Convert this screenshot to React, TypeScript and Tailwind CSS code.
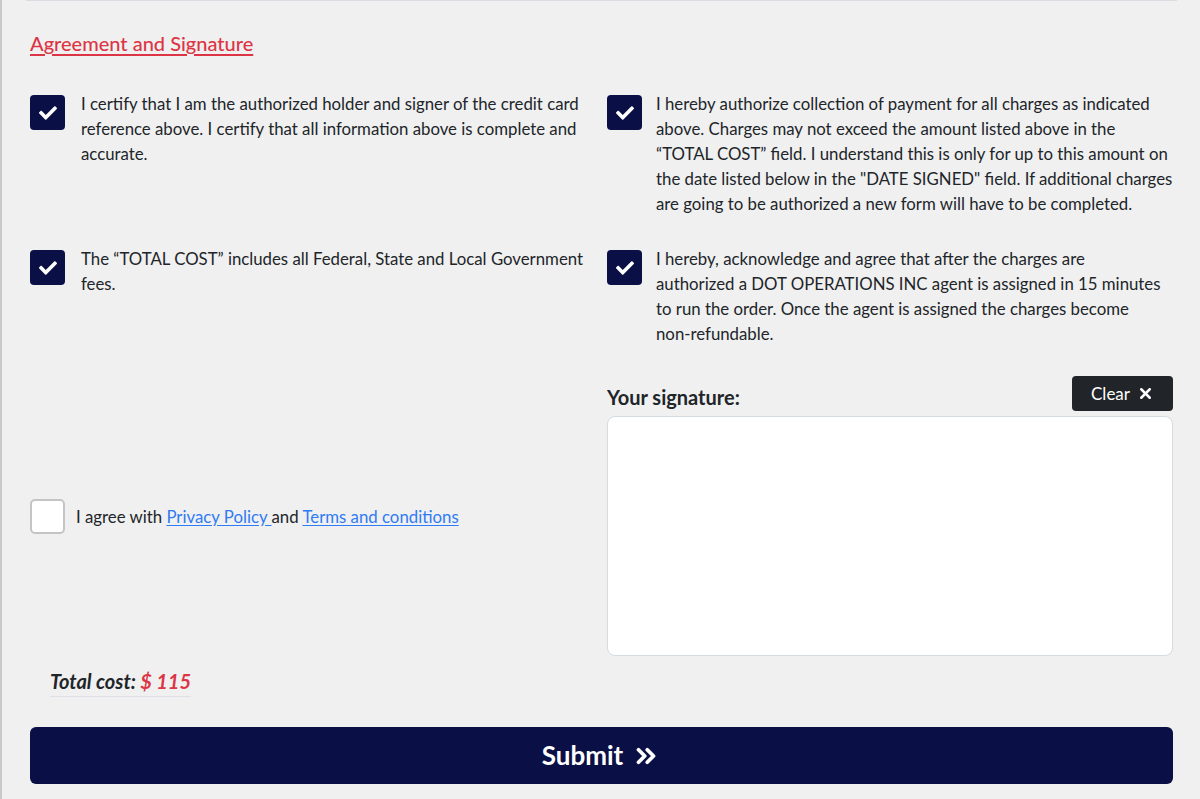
import { ChevronsRight, X } from "lucide-react";

const CheckBox = ({ checked }: { checked: boolean }) =>
    checked ? (
        <div className="w-[35px] h-[35px] shrink-0 rounded-[4px] bg-[#0a0f45] flex items-center justify-center mt-[4px]">
            <svg viewBox="0 0 512 512" className="w-[18px] h-[18px]" fill="#fff">
                <path d="M173.898 439.404l-166.4-166.4c-9.997-9.997-9.997-26.206 0-36.204l36.203-36.204c9.997-9.998 26.207-9.998 36.204 0L192 312.69 432.095 72.596c9.997-9.997 26.207-9.997 36.204 0l36.203 36.204c9.997 9.997 9.997 26.206 0 36.204l-294.4 294.401c-9.998 9.997-26.207 9.997-36.204-.001z" />
            </svg>
        </div>
    ) : (
        <div className="w-[35px] h-[35px] shrink-0 rounded-[5px] bg-white border-2 border-[#c4c4c4]" />
    );

const Agreement = ({ text, left, narrow }: { text: string; left?: boolean; narrow?: boolean }) => (
    <div className={`flex items-start ${left ? "gap-[16px]" : "gap-[14px]"}`}>
        <CheckBox checked />
        <p className={`text-[16.8px] leading-[25px] text-[#212529] ${narrow ? "pr-[10px]" : ""}`}>{text}</p>
    </div>
);

const App = () => {
    const items = [
        "I certify that I am the authorized holder and signer of the credit card reference above. I certify that all information above is complete and accurate.",
        "I hereby authorize collection of payment for all charges as indicated above. Charges may not exceed the amount listed above in the \u201CTOTAL COST\u201D field. I understand this is only for up to this amount on the date listed below in the \"DATE SIGNED\" field. If additional charges are going to be authorized a new form will have to be completed.",
        "The \u201CTOTAL COST\u201D includes all Federal, State and Local Government fees.",
        "I hereby, acknowledge and agree that after the charges are authorized a DOT OPERATIONS INC agent is assigned in 15 minutes to run the order. Once the agent is assigned the charges become non\u2011refundable.",
    ];

    return (
        <div className="min-h-screen w-full bg-[#f0f0f0] border-l-2 border-[#c9c9c9] font-['Lato',sans-serif] text-[#212529]">
            <div className="pl-[24px] pr-[23px] pb-[15px]">
                <div className="border-t border-[#d9dde2]" />
                <div className="px-[4px]">
                    {/* Heading */}
                    <h2 className="pt-[29px] text-[20px] leading-[26px] font-medium text-[#dc3545] underline underline-offset-[3px]">
                        Agreement and Signature
                    </h2>

                    {/* Agreements */}
                    <div className="grid grid-cols-2 gap-x-[11px] gap-y-[30px] mt-[35px]">
                        {items.map((t, i) => (
                            <Agreement key={i} text={t} left={i % 2 === 0} narrow={i === 3} />
                        ))}
                    </div>

                    {/* Policy + signature */}
                    <div className="grid grid-cols-2 gap-x-[11px] mt-[30px]">
                        <div className="flex items-center gap-[11px]">
                            <CheckBox checked={false} />
                            <span className="text-[16.8px] leading-[25px]">
                                I agree with{" "}
                                <a className="text-[#2f7bf5] underline underline-offset-2">Privacy Policy </a>and{" "}
                                <a className="text-[#2f7bf5] underline underline-offset-2">Terms and conditions</a>
                            </span>
                        </div>
                        <div className="flex flex-col">
                            <div className="flex items-end justify-between">
                                <span className="text-[20px] font-bold leading-[24px] pb-[2px]">Your signature:</span>
                                <button className="h-[35px] px-[19px] rounded-[4px] bg-[#212529] text-white text-[17px] flex items-center gap-[7px]">
                                    Clear <X size={17} strokeWidth={3.5} />
                                </button>
                            </div>
                            <div className="mt-[5px] h-[240px] bg-white rounded-[8px] border border-[#d6dbe0]" />
                        </div>
                    </div>

                    {/* Total */}
                    <div className="mt-[12px] ml-[20px] inline-block border-b border-[#dde1e6] pb-[2px] text-[20px] font-bold italic leading-[26px]">
                        Total cost: <span className="text-[#dc3545]">$ 115</span>
                    </div>

                    <button className="mt-[30px] w-full h-[57px] rounded-[6px] bg-[#0a0f45] text-white text-[26px] font-bold flex items-center justify-center gap-[8px]">
                        Submit <ChevronsRight size={30} strokeWidth={3} />
                    </button>
                </div>
            </div>
        </div>
    );
};

export default App;
